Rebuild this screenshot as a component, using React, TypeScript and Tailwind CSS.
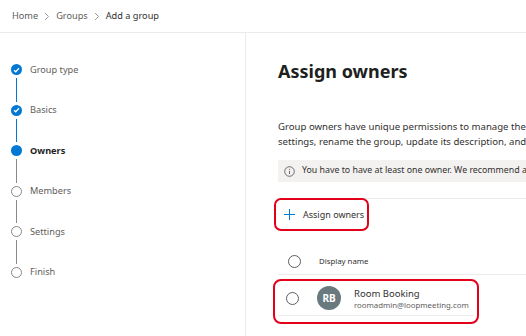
import React from 'react'

type Step = { label: string; state: 'done' | 'current' | 'todo' }

const steps: Step[] = [
  { label: 'Group type', state: 'done' },
  { label: 'Basics', state: 'done' },
  { label: 'Owners', state: 'current' },
  { label: 'Members', state: 'todo' },
  { label: 'Settings', state: 'todo' },
  { label: 'Finish', state: 'todo' },
]

function Chevron() {
  return (
    <svg width="6" height="9" viewBox="0 0 6 9" className="mx-[6px]">
      <path d="M1 1l3.5 3.5L1 8" fill="none" stroke="#a19f9d" strokeWidth="1" />
    </svg>
  )
}

function StepDot({ state }: { state: Step['state'] }) {
  if (state === 'done') {
    return (
      <span className="flex h-[11px] w-[11px] shrink-0 items-center justify-center rounded-full bg-[#0078d4]">
        <svg width="7" height="6" viewBox="0 0 7 6">
          <path d="M1 3.2l1.7 1.6L6 1.3" fill="none" stroke="#fff" strokeWidth="1.3" />
        </svg>
      </span>
    )
  }
  if (state === 'current') {
    return <span className="block h-[11px] w-[11px] shrink-0 rounded-full bg-[#0078d4]" />
  }
  return <span className="block h-[11px] w-[11px] shrink-0 rounded-full border-[1.5px] border-[#8a8886] bg-white" />
}

function Radio() {
  return <span className="block h-[13px] w-[13px] shrink-0 rounded-full border border-[#605e5c] bg-white" />
}

export default function App() {
  return (
    <div
      className="h-[336px] w-[526px] overflow-hidden bg-white text-[#323130]"
      style={{ fontFamily: '"Noto Sans", "Open Sans", sans-serif' }}
    >
      {/* breadcrumb */}
      <div className="flex h-[33px] items-center border-b border-[#edebe9] pl-[12px] text-[9.2px]">
        <span className="text-[#605e5c]">Home</span>
        <Chevron />
        <span className="text-[#605e5c]">Groups</span>
        <Chevron />
        <span>Add a group</span>
      </div>

      <div className="flex h-[303px]">
        {/* wizard steps */}
        <div className="w-[246px] shrink-0 border-r border-[#edebe9] pl-[11px] pt-[31px]">
          {steps.map((s, i) => {
            const last = i === steps.length - 1
            const lineBlue = s.state === 'done'
            return (
              <div key={s.label}>
                <div className="flex h-[11px] items-center">
                  <StepDot state={s.state} />
                  <span
                    className={
                      'ml-[8px] text-[9.2px] leading-none ' +
                      (s.state === 'current' ? 'font-bold text-[#201f1e]' : 'text-[#605e5c]')
                    }
                  >
                    {s.label}
                  </span>
                </div>
                {!last && (
                  <div className="flex h-[29.5px] w-[11px] justify-center py-[3px]">
                    <span className={'block w-px ' + (lineBlue ? 'bg-[#0078d4]' : 'bg-[#8a8886]')} />
                  </div>
                )}
              </div>
            )
          })}
        </div>

        {/* main */}
        <div className="min-w-0 flex-1 overflow-hidden pl-[32px]">
          <h1 className="mt-[24px] whitespace-nowrap text-[18px] font-bold leading-[28px] text-[#201f1e]">
            Assign owners
          </h1>
          <p className="mt-[34px] whitespace-nowrap text-[9.6px] leading-[15px]">
            Group owners have unique permissions to manage the group, such as adding or removing members.
            <br />
            settings, rename the group, update its description, and more.
          </p>

          <div className="mt-[11px] flex h-[22px] items-center whitespace-nowrap bg-[#f3f2f1] pl-[6px] text-[8.8px] text-[#323130]">
            <svg width="11" height="11" viewBox="0 0 11 11" className="mr-[7px] shrink-0">
              <circle cx="5.5" cy="5.5" r="4.8" fill="none" stroke="#605e5c" strokeWidth="0.9" />
              <path d="M5.5 4.8v3.2" stroke="#605e5c" strokeWidth="0.9" />
              <circle cx="5.5" cy="3.3" r="0.55" fill="#605e5c" />
            </svg>
            You have to have at least one owner. We recommend adding two or more owners to the group.
          </div>

          <div className="mt-[16px] border-t border-[#edebe9]" />

          <button className="-ml-[4px] -mt-[1px] flex h-[33px] items-center rounded-[7px] border-2 border-[#e3001b] pl-[8px] pr-[3px] text-[9px] text-[#323130]">
            <svg width="11" height="11" viewBox="0 0 11 11" className="mr-[8px]">
              <path d="M5.5 0v11M0 5.5h11" stroke="#0078d4" strokeWidth="1" />
            </svg>
            Assign owners
          </button>

          <div className="mt-[18px] flex h-[26px] items-center border-b border-[#edebe9] pl-[10px] text-[7.8px]">
            <Radio />
            <span className="ml-[18px]">Display name</span>
          </div>

          <div className="-ml-[5px] mt-[4px] h-[45px] w-[206px] rounded-[8px] border-2 border-[#e3001b] pl-[3px] pr-[3px]">
            <div className="flex h-[35px] items-center border-b border-[#edebe9] pl-[8px]">
              <Radio />
              <span className="ml-[18px] flex h-[24px] w-[24px] shrink-0 items-center justify-center rounded-full bg-[#69797e] text-[10px] font-bold text-white">
                RB
              </span>
              <div className="ml-[13px] pt-[3px] leading-none">
                <div className="text-[9.5px] text-[#323130]">Room Booking</div>
                <div className="mt-[3px] text-[7.8px] text-[#605e5c]">roomadmin@loopmeeting.com</div>
              </div>
            </div>
          </div>
        </div>
      </div>
    </div>
  )
}
